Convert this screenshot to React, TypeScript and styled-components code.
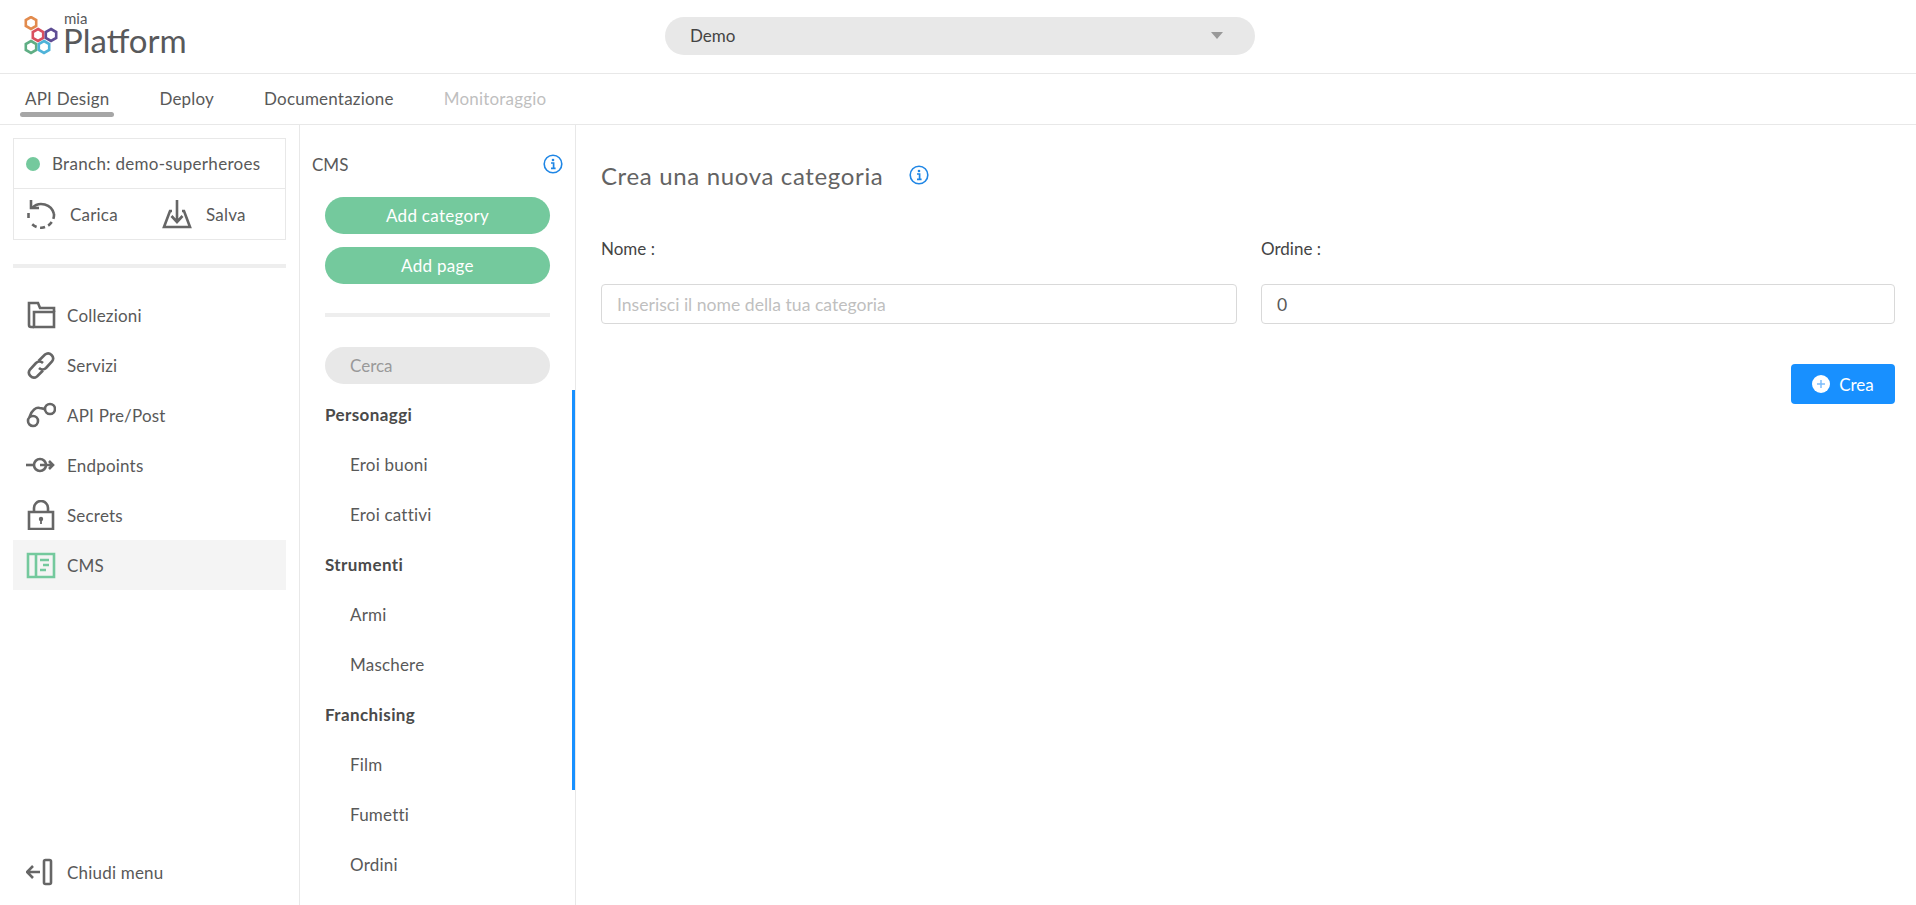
import React from "react";
import styled, { createGlobalStyle } from "styled-components";

const GlobalStyle = createGlobalStyle`
  html, body {
    margin: 0;
    padding: 0;
    height: 100%;
    background: #fff;
    overflow: hidden;
  }
  * {
    box-sizing: border-box;
  }
  body {
    font-family: Lato, "Open Sans", sans-serif;
    color: #595959;
  }
`;

const Page = styled.div`
  width: 1916px;
  height: 905px;
  display: flex;
  flex-direction: column;
  overflow: hidden;
`;

const Header = styled.header`
  height: 74px;
  flex: none;
  display: flex;
  align-items: center;
  border-bottom: 1px solid #e8e8e8;
  padding-left: 24px;
`;

const Logo = styled.div`
  width: 641px;
  height: 44px;
  flex: none;
  display: flex;
  align-items: flex-end;
  gap: 5px;
  margin-top: -6px;
`;

const LogoWords = styled.div`
  display: flex;
  flex-direction: column;
  color: #58595b;
`;

const LogoSmall = styled.span`
  font-size: 15px;
  line-height: 12px;
  padding-left: 1px;
`;

const LogoBig = styled.span`
  font-size: 33px;
  line-height: 32px;
`;

const ProjectSelect = styled.div`
  width: 590px;
  height: 38px;
  margin-top: -2px;
  border-radius: 19px;
  background: #e8e8e8;
  display: flex;
  align-items: center;
  justify-content: space-between;
  padding: 0 32px 0 25px;
  font-size: 17px;
  color: #444;
`;

const Caret = styled.span`
  width: 0;
  height: 0;
  border-left: 6.5px solid transparent;
  border-right: 6.5px solid transparent;
  border-top: 7px solid #999;
`;

const Tabs = styled.nav`
  height: 51px;
  flex: none;
  display: flex;
  padding-left: 25px;
  gap: 50px;
  border-bottom: 1px solid #e8e8e8;
`;

const Tab = styled.div<{ $active?: boolean; $disabled?: boolean }>`
  position: relative;
  font-size: 17px;
  letter-spacing: 0.2px;
  line-height: 50px;
  color: ${(p) => (p.$disabled ? "#bfbfbf" : "#595959")};

  ${(p) =>
    p.$active &&
    `
    &::after {
      content: "";
      position: absolute;
      left: -5px;
      right: -5px;
      bottom: 7px;
      height: 5px;
      border-radius: 3px;
      background: #a6a6a6;
    }
  `}
`;

const Body = styled.div`
  flex: 1;
  display: flex;
  min-height: 0;
`;

const Sidebar = styled.aside`
  width: 300px;
  flex: none;
  border-right: 1px solid #e8e8e8;
  padding: 13px 13px 0;
  display: flex;
  flex-direction: column;
`;

const BranchCard = styled.div`
  height: 102px;
  flex: none;
  border: 1px solid #e8e8e8;
  display: flex;
  flex-direction: column;
`;

const BranchRow = styled.div`
  height: 50px;
  flex: none;
  display: flex;
  align-items: center;
  gap: 12px;
  padding-left: 12px;
  border-bottom: 1px solid #e8e8e8;
  font-size: 17px;
  letter-spacing: 0.3px;
`;

const Dot = styled.span`
  width: 14px;
  height: 14px;
  border-radius: 50%;
  background: #74c99d;
`;

const BranchActions = styled.div`
  flex: 1;
  display: flex;
  align-items: center;
  padding-left: 12px;
`;

const BranchAction = styled.div`
  flex: none;
  width: 136px;
  display: flex;
  align-items: center;
  gap: 14px;
  font-size: 17px;
  letter-spacing: 0.2px;
`;

const Divider = styled.div`
  height: 4px;
  flex: none;
  background: #eeeeee;
`;

const SideDivider = styled(Divider)`
  margin: 24px 0 22px;
`;

const MenuItem = styled.div<{ $active?: boolean }>`
  height: 50px;
  flex: none;
  width: 273px;
  display: flex;
  align-items: center;
  gap: 11px;
  padding-left: 13px;
  font-size: 17px;
  letter-spacing: 0.2px;
  background: ${(p) => (p.$active ? "#f4f4f4" : "transparent")};
`;

const CloseMenu = styled(MenuItem)`
  margin-top: auto;
  margin-bottom: 8px;
`;

const IconBox = styled.svg<{ $tone?: string }>`
  width: 30px;
  height: 30px;
  flex: none;
  fill: none;
  stroke: ${(p) => p.$tone || "#666"};
  stroke-width: 2.6;
`;

const CmsColumn = styled.section`
  width: 276px;
  flex: none;
  position: relative;
  border-right: 1px solid #e8e8e8;
  padding: 0 25px;
  overflow: hidden;
`;

const Scrollbar = styled.div`
  position: absolute;
  right: 0;
  top: 265px;
  width: 3px;
  height: 400px;
  background: #1890ff;
`;

const CmsHead = styled.div`
  height: 30px;
  margin: 24px -13px 18px;
  display: flex;
  align-items: center;
  justify-content: space-between;
  font-size: 17px;
`;

const InfoIcon = styled.svg`
  width: 20px;
  height: 20px;
  flex: none;
`;

const GreenButton = styled.div`
  height: 37px;
  border-radius: 19px;
  background: #74c99d;
  color: #fff;
  font-size: 17px;
  letter-spacing: 0.3px;
  display: flex;
  align-items: center;
  justify-content: center;
  margin-bottom: 13px;
`;

const CmsDivider = styled(Divider)`
  margin: 29px 0 30px;
`;

const SearchBox = styled.div`
  height: 37px;
  border-radius: 19px;
  background: #e8e8e8;
  color: #999;
  font-size: 17px;
  display: flex;
  align-items: center;
  padding-left: 25px;
  margin-bottom: 5px;
`;

const TreeHeading = styled.div`
  height: 50px;
  display: flex;
  align-items: center;
  font-size: 17px;
  font-weight: 700;
  letter-spacing: 0.4px;
  color: #4a4a4a;
`;

const TreeLeaf = styled.div`
  height: 50px;
  display: flex;
  align-items: center;
  font-size: 17px;
  letter-spacing: 0.2px;
  padding-left: 25px;
`;

const Main = styled.main`
  flex: 1;
  padding: 30px 21px 0 25px;
`;

const TitleRow = styled.div`
  display: flex;
  align-items: center;
  gap: 26px;
  height: 40px;
  margin-bottom: 42px;
`;

const Title = styled.h1`
  margin: 0;
  font-size: 24px;
  letter-spacing: 0.65px;
  font-weight: 400;
  color: #636363;
`;

const FormRow = styled.div`
  display: grid;
  grid-template-columns: 636px 634px;
  column-gap: 24px;
`;

const Field = styled.div``;

const Label = styled.div`
  font-size: 17px;
  line-height: 24px;
  color: #444;
  margin-bottom: 23px;
`;

const Input = styled.div<{ $placeholder?: boolean; $nudge?: boolean }>`
  height: 40px;
  margin-top: ${(p) => (p.$nudge ? 2 : 0)}px;
  border: 1px solid #d9d9d9;
  border-radius: 4px;
  display: flex;
  align-items: center;
  padding-left: 15px;
  font-size: 17.6px;
  color: ${(p) => (p.$placeholder ? "#bfbfbf" : "#595959")};
`;

const Actions = styled.div`
  display: flex;
  justify-content: flex-end;
  margin-top: 40px;
`;

const PrimaryButton = styled.div`
  width: 104px;
  height: 40px;
  border-radius: 4px;
  background: #1890ff;
  color: #fff;
  font-size: 17px;
  display: flex;
  align-items: center;
  justify-content: center;
  gap: 9px;
`;

const MiaLogo = () => {
  const hex = (cx: number, cy: number, color: string) => {
    const r = 6;
    const pts = [0, 1, 2, 3, 4, 5]
      .map((i) => {
        const a = (Math.PI / 3) * i - Math.PI / 2;
        return `${cx + r * Math.cos(a)},${cy + r * Math.sin(a)}`;
      })
      .join(" ");
    return <polygon points={pts} fill="none" stroke={color} strokeWidth="2.6" />;
  };
  return (
    <svg width="34" height="40" viewBox="0 0 34 40">
      {hex(7, 7, "#e28b4e")}
      {hex(14, 19, "#d9505f")}
      {hex(27, 19, "#5e4d94")}
      {hex(7, 31, "#5fae84")}
      {hex(20, 31, "#4fb3d9")}
    </svg>
  );
};

const Info = () => (
  <InfoIcon viewBox="0 0 20 20">
    <circle cx="10" cy="10" r="8.8" fill="none" stroke="#1f86e5" strokeWidth="1.6" />
    <circle cx="10" cy="6" r="1.3" fill="#1f86e5" />
    <path d="M8 9h2.6v5M8 14.4h4.6" fill="none" stroke="#1f86e5" strokeWidth="1.7" />
  </InfoIcon>
);

const ReloadIcon = () => (
  <IconBox viewBox="0 0 30 30">
    <path d="M6 9 A13 13 0 0 1 28 15" />
    <path d="M5 1v8h8" />
    <path d="M28 15a13 13 0 0 1-23 9" strokeDasharray="5 3.500" />
    <path d="M2.500 19v-5" />
  </IconBox>
);

const SaveIcon = () => (
  <IconBox viewBox="0 0 30 30">
    <path d="M10 12H8L2 28h26l-6-16h-2" />
    <path d="M15 1v22M9.500 17l5.500 6 5.500-6" />
  </IconBox>
);

const FolderIcon = () => (
  <IconBox viewBox="0 0 30 30">
    <path d="M8 27H5a2 2 0 0 1-2-2V3h9l2 5h14v4" />
    <path d="M8 12h20v15H8z" />
  </IconBox>
);

const LinkIcon = () => (
  <IconBox viewBox="0 0 30 30">
    <path d="M12.500 11 19 4.500a5 5 0 0 1 7 7L20 18a5 5 0 0 1-7 0" />
    <path d="M17 13a5 5 0 0 0-7 0l-6 6.500a5 5 0 0 0 7 7l6-6" />
  </IconBox>
);

const HookIcon = () => (
  <IconBox viewBox="0 0 30 30">
    <circle cx="7" cy="21" r="5" />
    <circle cx="24" cy="9" r="5" />
    <path d="M3.500 17c2-7 7-10 10-9 3 0 3 1 5.500 1" />
  </IconBox>
);

const EndpointIcon = () => (
  <IconBox viewBox="0 0 30 30">
    <path d="M0 15h8" />
    <circle cx="14" cy="15" r="6" />
    <path d="M14 15h13M23 11l4 4-4 4" />
  </IconBox>
);

const LockIcon = () => (
  <IconBox viewBox="0 0 30 30">
    <path d="M3 12h24v17H3z" />
    <path d="M8 12V8a7 7 0 0 1 14 0v4" />
    <circle cx="15" cy="19" r="2.200" fill="#666" stroke="none" />
    <path d="M15 20v4" strokeWidth="1.800" />
  </IconBox>
);

const CmsIcon = () => (
  <IconBox viewBox="0 0 30 30" $tone="#74c99d">
    <path d="M2 4h26v23H2zM10 4v23" />
    <path d="M14 10h9M17 15h6M14 20h6" />
  </IconBox>
);

const CloseIcon = () => (
  <IconBox viewBox="0 0 30 30">
    <path d="M1 15h13M7 9l-6 6 6 6" />
    <rect x="18" y="3" width="7" height="24" rx="1.500" />
  </IconBox>
);

const App = () => (
  <>
    <GlobalStyle />
    <Page>
      <Header>
        <Logo>
          <MiaLogo />
          <LogoWords>
            <LogoSmall>mia</LogoSmall>
            <LogoBig>Platform</LogoBig>
          </LogoWords>
        </Logo>
        <ProjectSelect>
          Demo
          <Caret />
        </ProjectSelect>
      </Header>
      <Tabs>
        <Tab $active>API Design</Tab>
        <Tab>Deploy</Tab>
        <Tab>Documentazione</Tab>
        <Tab $disabled>Monitoraggio</Tab>
      </Tabs>
      <Body>
        <Sidebar>
          <BranchCard>
            <BranchRow>
              <Dot />
              Branch: demo-superheroes
            </BranchRow>
            <BranchActions>
              <BranchAction>
                <ReloadIcon />
                Carica
              </BranchAction>
              <BranchAction>
                <SaveIcon />
                Salva
              </BranchAction>
            </BranchActions>
          </BranchCard>
          <SideDivider />
          <MenuItem>
            <FolderIcon />
            Collezioni
          </MenuItem>
          <MenuItem>
            <LinkIcon />
            Servizi
          </MenuItem>
          <MenuItem>
            <HookIcon />
            API Pre/Post
          </MenuItem>
          <MenuItem>
            <EndpointIcon />
            Endpoints
          </MenuItem>
          <MenuItem>
            <LockIcon />
            Secrets
          </MenuItem>
          <MenuItem $active>
            <CmsIcon />
            CMS
          </MenuItem>
          <CloseMenu>
            <CloseIcon />
            Chiudi menu
          </CloseMenu>
        </Sidebar>
        <CmsColumn>
          <Scrollbar />
          <CmsHead>
            CMS
            <Info />
          </CmsHead>
          <GreenButton>Add category</GreenButton>
          <GreenButton>Add page</GreenButton>
          <CmsDivider />
          <SearchBox>Cerca</SearchBox>
          <TreeHeading>Personaggi</TreeHeading>
          <TreeLeaf>Eroi buoni</TreeLeaf>
          <TreeLeaf>Eroi cattivi</TreeLeaf>
          <TreeHeading>Strumenti</TreeHeading>
          <TreeLeaf>Armi</TreeLeaf>
          <TreeLeaf>Maschere</TreeLeaf>
          <TreeHeading>Franchising</TreeHeading>
          <TreeLeaf>Film</TreeLeaf>
          <TreeLeaf>Fumetti</TreeLeaf>
          <TreeLeaf>Ordini</TreeLeaf>
        </CmsColumn>
        <Main>
          <TitleRow>
            <Title>Crea una nuova categoria</Title>
            <Info />
          </TitleRow>
          <FormRow>
            <Field>
              <Label>Nome :</Label>
              <Input $placeholder>Inserisci il nome della tua categoria</Input>
            </Field>
            <Field>
              <Label>Ordine :</Label>
              <Input $nudge>0</Input>
            </Field>
          </FormRow>
          <Actions>
            <PrimaryButton>
              <svg width="18" height="18" viewBox="0 0 18 18">
                <circle cx="9" cy="9" r="9" fill="#fff" />
                <path d="M9 5v8M5 9h8" stroke="#7dbdfb" strokeWidth="1.500" />
              </svg>
              Crea
            </PrimaryButton>
          </Actions>
        </Main>
      </Body>
    </Page>
  </>
);

export default App;
